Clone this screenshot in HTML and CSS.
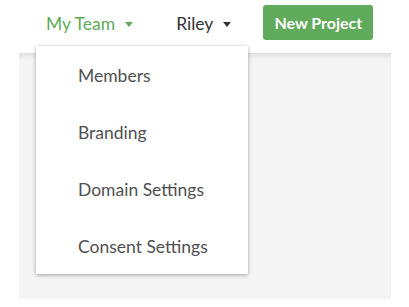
FILE: index.html
```html
<!DOCTYPE html>
<html lang="en">
<head>
  <meta charset="UTF-8">
  <meta name="viewport" content="width=device-width, initial-scale=1.0">
  <title>My Team</title>
  <link rel="stylesheet" href="styles.css">
</head>
<body>
  <!-- Верхняя панель -->
  <header class="topbar">
    <div class="nav-item team">
      My Team <span class="caret"></span>
      <!-- Выпадающее меню команды -->
      <ul class="dropdown">
        <li>Members</li>
        <li>Branding</li>
        <li>Domain Settings</li>
        <li>Consent Settings</li>
      </ul>
    </div>
    <div class="nav-item user">Riley <span class="caret"></span></div>
    <button class="new-project">New Project</button>
  </header>

  <main class="content"></main>
</body>
</html>
```

FILE: styles.css
```css
body {
  font-family: Lato, "Open Sans", sans-serif;
  margin: 0;
  background-color: #ffffff;
  color: #333333;
}

.topbar {
  display: flex;
  align-items: center;
  height: 45px;
  padding-left: 46px;
}

.nav-item {
  position: relative;
  display: flex;
  align-items: center;
  font-size: 17.5px;
  padding-top: 2px;
  cursor: pointer;
}

.team {
  color: #5cab57;
  margin-right: 43px;
}

.user {
  color: #333333;
  margin-right: 32px;
}

.caret {
  display: inline-block;
  width: 0;
  height: 0;
  margin-left: 10px;
  margin-top: 2px;
  border-left: 4.5px solid transparent;
  border-right: 4.5px solid transparent;
  border-top: 5px solid currentColor;
}

.new-project {
  font-family: inherit;
  font-size: 16px;
  font-weight: bold;
  color: white;
  background-color: #60aa5b;
  border: none;
  border-radius: 3px;
  height: 35px;
  width: 110px;
  padding: 0;
  cursor: pointer;
}

.content {
  margin: 8px 18px 0 19px;
  height: 246px;
  background-color: #f5f5f5;
  box-shadow: inset 0 6px 6px -4px rgba(0, 0, 0, 0.12);
}

.dropdown {
  position: absolute;
  top: 35px;
  left: -10px;
  width: 212px;
  margin: 0;
  padding: 0;
  list-style: none;
  background-color: white;
  box-shadow: 0 1px 4px rgba(0, 0, 0, 0.35);
  z-index: 2;
}

.dropdown li {
  height: 57px;
  line-height: 59px;
  padding-left: 42px;
  font-size: 17.5px;
  color: #505050;
}
```
